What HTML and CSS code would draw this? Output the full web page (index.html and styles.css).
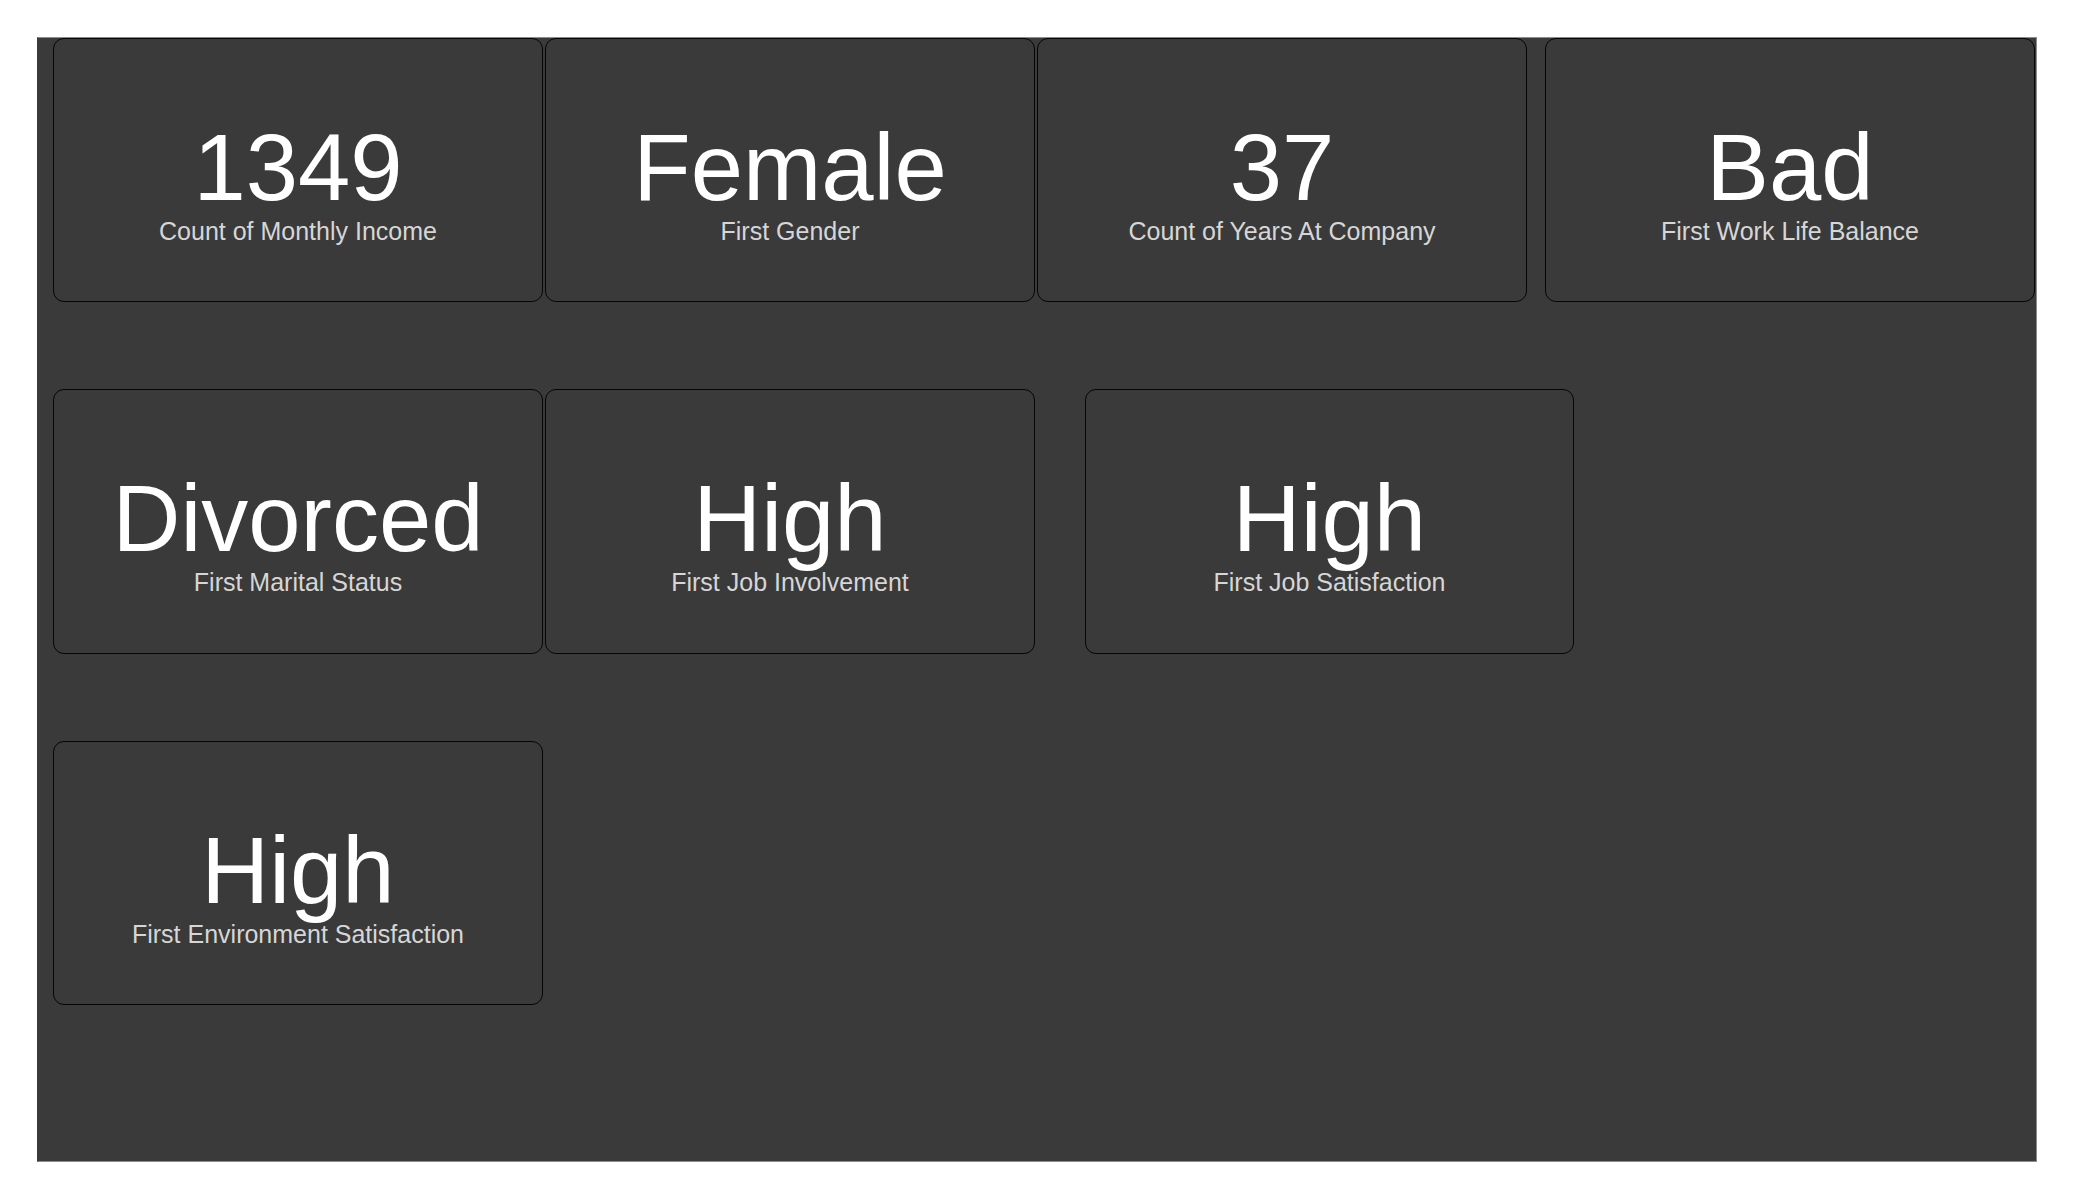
FILE: index.html
```html
<!DOCTYPE html>
<html lang="en">
<head>
<meta charset="utf-8">
<title>HR Dashboard</title>
<link rel="stylesheet" href="styles.css">
</head>
<body>
<div class="canvas">
  <div class="row row-1">
    <div class="card"><div class="value">1349</div><div class="label">Count of Monthly Income</div></div>
    <div class="card"><div class="value">Female</div><div class="label">First Gender</div></div>
    <div class="card"><div class="value">37</div><div class="label">Count of Years At Company</div></div>
    <div class="card card-offset-a"><div class="value">Bad</div><div class="label">First Work Life Balance</div></div>
  </div>
  <div class="row row-2">
    <div class="card card-tall"><div class="value">Divorced</div><div class="label">First Marital Status</div></div>
    <div class="card card-tall"><div class="value">High</div><div class="label">First Job Involvement</div></div>
    <div class="card card-tall card-offset-b"><div class="value">High</div><div class="label">First Job Satisfaction</div></div>
  </div>
  <div class="row row-3">
    <div class="card"><div class="value">High</div><div class="label">First Environment Satisfaction</div></div>
  </div>
</div>
</body>
</html>
```

FILE: styles.css
```css
html, body {
  margin: 0;
  padding: 0;
  background: #ffffff;
}

body {
  font-family: "Liberation Sans", Arial, sans-serif;
}

.canvas {
  box-sizing: border-box;
  margin: 37px 0 0 37px;
  width: 2000px;
  height: 1125px;
  background: #3a3a3a;
  border: 1px solid #8c8c8c;
  border-left-color: #3a3a3a;
  display: flex;
  flex-direction: column;
}

.row {
  display: flex;
  gap: 2px;
  padding-left: 15px;
}

.row-2,
.row-3 {
  margin-top: 87px;
}

.card {
  box-sizing: border-box;
  width: 490px;
  height: 264px;
  border: 1px solid #050505;
  border-radius: 11px;
  background: #3a3a3a;
  padding-top: 81px;
  display: flex;
  flex-direction: column;
  align-items: center;
  text-align: center;
}

.card-tall {
  height: 265px;
}

.card-offset-a {
  margin-left: 16px;
}

.card-offset-b {
  margin-left: 48px;
  width: 489px;
}

.value {
  font-size: 94px;
  line-height: 96px;
  color: #ffffff;
  white-space: nowrap;
}

.label {
  font-size: 25px;
  line-height: 30px;
  color: #d6d6d6;
  white-space: nowrap;
}
```
